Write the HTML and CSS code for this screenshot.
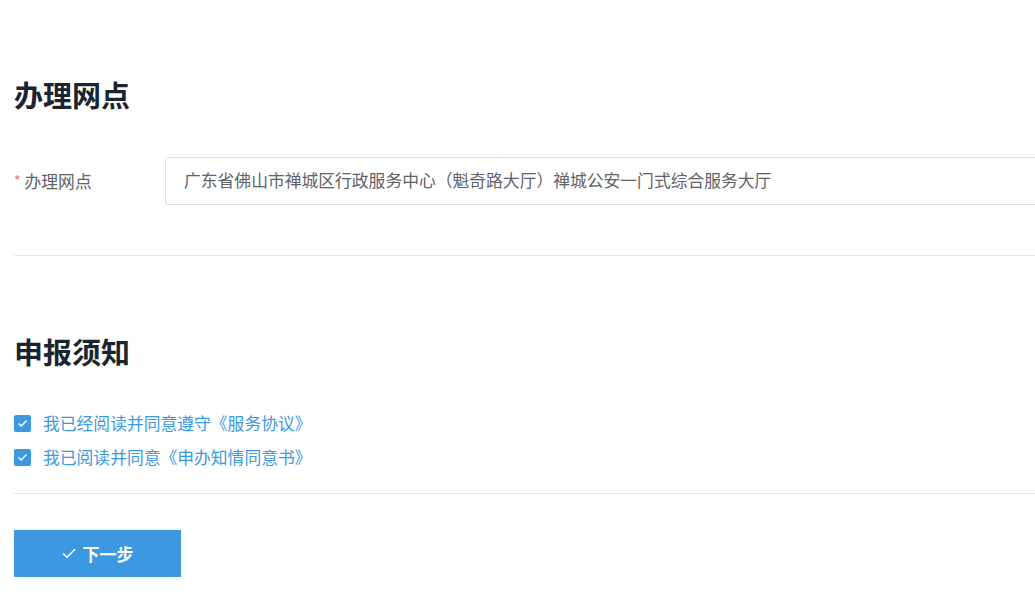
FILE: index.html
```html
<html>
<head>
    <meta charset="utf-8">
    <title>申报</title>
    <link rel="stylesheet" href="styles.css">
</head>
<body>
<div class="page">
    <h2 class="section-title first">办理网点</h2>
    <div class="form-row">
        <label class="form-label"><span class="required">*</span>办理网点</label>
        <div class="form-input">广东省佛山市禅城区行政服务中心（魁奇路大厅）禅城公安一门式综合服务大厅</div>
    </div>
    <div class="divider first-divider"></div>

    <h2 class="section-title second">申报须知</h2>
    <div class="agree-list">
        <label class="agree-item">
            <span class="check-box">
                <svg width="11" height="9" viewBox="0 0 11 9"><path d="M1.5 4.6 L4.2 7.1 L9.5 1.6" fill="none" stroke="#fff" stroke-width="1.4"/></svg>
            </span>
            <span class="agree-text">我已经阅读并同意遵守《服务协议》</span>
        </label>
        <label class="agree-item">
            <span class="check-box">
                <svg width="11" height="9" viewBox="0 0 11 9"><path d="M1.5 4.6 L4.2 7.1 L9.5 1.6" fill="none" stroke="#fff" stroke-width="1.4"/></svg>
            </span>
            <span class="agree-text">我已阅读并同意《申办知情同意书》</span>
        </label>
    </div>
    <div class="divider second-divider"></div>

    <button class="next-btn">
        <svg width="14" height="11" viewBox="0 0 14 11"><path d="M1 5.5 L5 9.3 L13 1.2" fill="none" stroke="#fff" stroke-width="1.5"/></svg>
        <span>下一步</span>
    </button>
</div>
</body>
</html>
```

FILE: styles.css
```css
html, body{
    margin: 0;
    padding: 0;
    background: #fff;
}
.page{
    padding: 0 0 0 14px;
    font-family: "Noto Sans CJK SC", "Noto Sans", sans-serif;
    color: #606266;
}
.section-title{
    margin: 0;
    font-size: 29px;
    line-height: 40px;
    font-weight: bold;
    color: #1a2530;
}
.section-title.first{
    padding-top: 74px;
}
.section-title.second{
    margin-top: 75px;
}
.form-row{
    display: flex;
    align-items: center;
    margin-top: 43px;
}
.form-label{
    width: 151px;
    font-size: 16.8px;
    color: #606266;
}
.required{
    color: #f56c6c;
    font-size: 14px;
    margin-right: 4px;
    vertical-align: 2px;
}
/* the field runs on past the right edge of the window */
.form-input{
    flex: 1;
    height: 46px;
    line-height: 45px;
    border: 1px solid #dcdfe6;
    border-right: none;
    border-radius: 4px 0 0 4px;
    padding: 0 0 0 18px;
    font-size: 16.8px;
    color: #606266;
    white-space: nowrap;
    overflow: hidden;
}
.divider{
    height: 1px;
    background: #e4e7ed;
}
.first-divider{
    margin-top: 50px;
}
.agree-list{
    margin-top: 35px;
}
.agree-item{
    display: flex;
    align-items: center;
    height: 34px;
}
.check-box{
    width: 17px;
    height: 17px;
    border-radius: 2px;
    background: #3d98e2;
    display: flex;
    align-items: center;
    justify-content: center;
    margin-right: 12px;
}
.agree-text{
    font-size: 16.8px;
    color: #3d98e2;
}
.second-divider{
    margin-top: 19px;
}
.next-btn{
    margin-top: 36px;
    width: 167px;
    height: 47px;
    border: none;
    background: #3d98e2;
    color: #fff;
    font-family: "Noto Sans CJK SC", sans-serif;
    font-size: 17px;
    font-weight: bold;
    display: flex;
    align-items: center;
    justify-content: center;
    gap: 7px;
    padding: 0;
}
```
